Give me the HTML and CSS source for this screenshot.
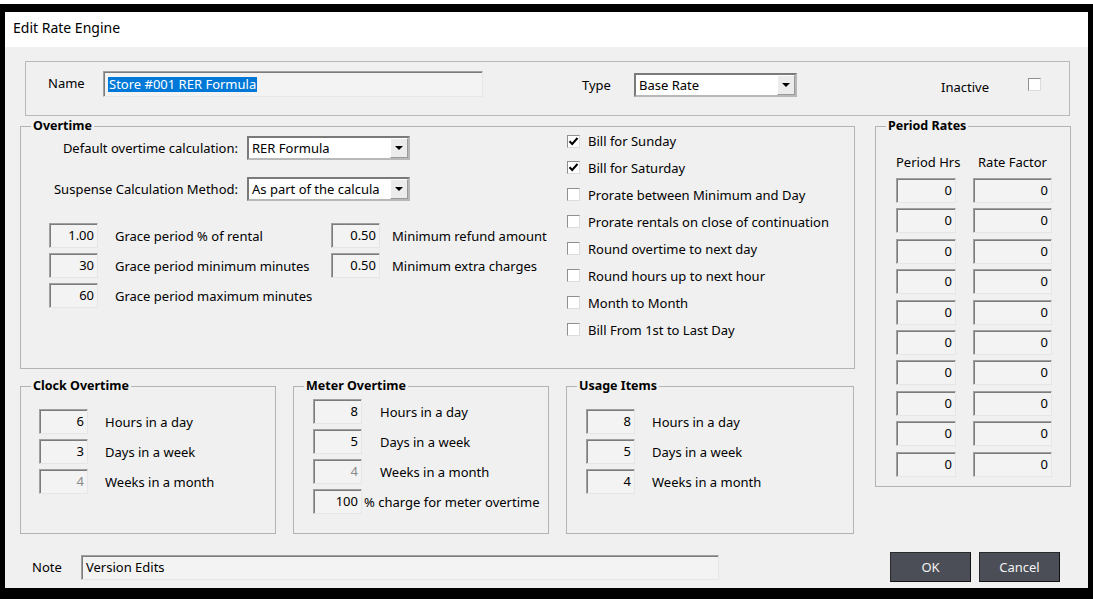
FILE: index.html
```html
<!DOCTYPE html>
<html>
<head>
<meta charset="utf-8">
<title>Edit Rate Engine</title>
<link rel="stylesheet" href="styles.css">
</head>
<body>
<div class="frame">
  <div class="titlebar">Edit Rate Engine</div>
  <div class="content">
    <div class="namebox">
      <span class="nm-label">Name</span>
      <span class="tb tb-left nm-input"><span class="sel-text">Store #001 RER Formula</span></span>
      <span class="type-label">Type</span>
      <span class="sel type-sel"><span class="sel-val">Base Rate</span><span class="sel-btn"><span class="tri"></span></span></span>
      <span class="inactive-label">Inactive</span>
      <span class="cb inactive-cb"></span>
    </div>

    <div class="main">
      <div class="left">
        <fieldset class="group overtime">
          <legend>Overtime</legend>
          <div class="ot-body">
            <div class="ot-left">
              <div class="sel-row">
                <span class="sel-label">Default overtime calculation:</span>
                <span class="sel"><span class="sel-val">RER Formula</span><span class="sel-btn"><span class="tri"></span></span></span>
              </div>
              <div class="sel-row second">
                <span class="sel-label">Suspense Calculation Method:</span>
                <span class="sel"><span class="sel-val">As part of the calcula</span><span class="sel-btn"><span class="tri"></span></span></span>
              </div>
              <div class="grace">
                <div class="fld-col">
                  <div class="fld"><span class="tb">1.00</span><span class="fl gl">Grace period % of rental</span></div>
                  <div class="fld"><span class="tb">30</span><span class="fl gl">Grace period minimum minutes</span></div>
                  <div class="fld"><span class="tb">60</span><span class="fl gl">Grace period maximum minutes</span></div>
                </div>
                <div class="fld-col">
                  <div class="fld"><span class="tb">0.50</span><span class="fl gr">Minimum refund amount</span></div>
                  <div class="fld"><span class="tb">0.50</span><span class="fl gr">Minimum extra charges</span></div>
                </div>
              </div>
            </div>
            <div class="cb-list">
              <div class="cb-row"><span class="cb"><svg viewBox="0 0 11 11" width="11" height="11"><path d="M1.5 5.2 L4.2 8 L9.5 2" fill="none" stroke="#000" stroke-width="2"/></svg></span><span class="cb-label">Bill for Sunday</span></div>
              <div class="cb-row"><span class="cb"><svg viewBox="0 0 11 11" width="11" height="11"><path d="M1.5 5.2 L4.2 8 L9.5 2" fill="none" stroke="#000" stroke-width="2"/></svg></span><span class="cb-label">Bill for Saturday</span></div>
              <div class="cb-row"><span class="cb"></span><span class="cb-label">Prorate between Minimum and Day</span></div>
              <div class="cb-row"><span class="cb"></span><span class="cb-label">Prorate rentals on close of continuation</span></div>
              <div class="cb-row"><span class="cb"></span><span class="cb-label">Round overtime to next day</span></div>
              <div class="cb-row"><span class="cb"></span><span class="cb-label">Round hours up to next hour</span></div>
              <div class="cb-row"><span class="cb"></span><span class="cb-label">Month to Month</span></div>
              <div class="cb-row"><span class="cb"></span><span class="cb-label">Bill From 1st to Last Day</span></div>
            </div>
          </div>
        </fieldset>

        <div class="subgroups">
          <fieldset class="group clock">
            <legend>Clock Overtime</legend>
            <div class="sg-body clock-body">
              <div class="fld"><span class="tb">6</span><span class="fl">Hours in a day</span></div>
              <div class="fld"><span class="tb">3</span><span class="fl">Days in a week</span></div>
              <div class="fld"><span class="tb dis">4</span><span class="fl">Weeks in a month</span></div>
            </div>
          </fieldset>
          <fieldset class="group meter">
            <legend>Meter Overtime</legend>
            <div class="sg-body meter-body">
              <div class="fld"><span class="tb">8</span><span class="fl">Hours in a day</span></div>
              <div class="fld"><span class="tb">5</span><span class="fl">Days in a week</span></div>
              <div class="fld"><span class="tb dis">4</span><span class="fl">Weeks in a month</span></div>
              <div class="fld"><span class="tb">100</span><span class="fl pct">% charge for meter overtime</span></div>
            </div>
          </fieldset>
          <fieldset class="group usage">
            <legend>Usage Items</legend>
            <div class="sg-body usage-body">
              <div class="fld"><span class="tb">8</span><span class="fl">Hours in a day</span></div>
              <div class="fld"><span class="tb">5</span><span class="fl">Days in a week</span></div>
              <div class="fld"><span class="tb">4</span><span class="fl">Weeks in a month</span></div>
            </div>
          </fieldset>
        </div>
      </div>

      <fieldset class="group period">
        <legend>Period Rates</legend>
        <div class="pr-body">
          <span class="pr-head">Period Hrs</span><span class="pr-head">Rate Factor</span>
          <span class="tb">0</span><span class="tb">0</span>
          <span class="tb">0</span><span class="tb">0</span>
          <span class="tb">0</span><span class="tb">0</span>
          <span class="tb">0</span><span class="tb">0</span>
          <span class="tb">0</span><span class="tb">0</span>
          <span class="tb">0</span><span class="tb">0</span>
          <span class="tb">0</span><span class="tb">0</span>
          <span class="tb">0</span><span class="tb">0</span>
          <span class="tb">0</span><span class="tb">0</span>
          <span class="tb">0</span><span class="tb">0</span>
        </div>
      </fieldset>
    </div>

    <div class="footer">
      <span class="note-label">Note</span>
      <span class="tb tb-left note-input">Version Edits</span>
      <span class="btn ok">OK</span>
      <span class="btn cancel">Cancel</span>
    </div>
  </div>
</div>
</body>
</html>
```
FILE: styles.css
```css
* { box-sizing: border-box; }
html, body { margin: 0; padding: 0; background: #fff; }
body {
  font-family: "Noto Sans", "Liberation Sans", sans-serif;
  font-size: 13px;
  line-height: 16px;
  color: #000;
  padding-top: 4px;
  width: 1093px;
  height: 599px;
  overflow: hidden;
}
.frame {
  border-style: solid;
  border-color: #000;
  border-width: 8px 5px 11px 5px;
  height: 595px;
  display: flex;
  flex-direction: column;
}
.titlebar {
  height: 35px;
  flex: none;
  background: #fff;
  padding: 0 0 3px 8px;
  display: flex;
  align-items: center;
  font-size: 14px;
}
.content {
  height: 541px;
  flex: none;
  background: #f0f0f0;
  padding-top: 14px;
}

/* generic controls */
.tb {
  display: block;
  height: 25px;
  background: #f3f3f3;
  border: 1px solid;
  border-color: #a0a0a0 #e6e6e6 #e6e6e6 #a0a0a0;
  box-shadow: inset 1px 1px 0 #7c7c7c;
  text-align: right;
  padding: 0 3px 0 4px;
  line-height: 23px;
  white-space: nowrap;
  overflow: hidden;
}
.tb-left { text-align: left; }
.tb.dis { color: #8a8a8a; }
.sel {
  display: flex;
  height: 24px;
  background: #fff;
  border: 2px solid;
  border-color: #7a7a7a #b8b8b8 #b8b8b8 #7a7a7a;
}
.sel-val {
  flex: 1;
  padding-left: 3px;
  line-height: 20px;
  white-space: nowrap;
  overflow: hidden;
}
.sel-btn {
  width: 18px;
  flex: none;
  background: #ececec;
  border: 1px solid;
  border-color: #fff #9a9a9a #9a9a9a #fff;
  display: flex;
  align-items: center;
  justify-content: center;
}
.tri {
  width: 0;
  height: 0;
  border-left: 4px solid transparent;
  border-right: 4px solid transparent;
  border-top: 4px solid #000;
}
.cb {
  display: flex;
  align-items: center;
  justify-content: center;
  width: 13px;
  height: 13px;
  flex: none;
  background: #fff;
  border: 1px solid;
  border-color: #8f8f8f #dcdcdc #dcdcdc #8f8f8f;
}
.cb svg { display: block; }

/* name box */
.namebox {
  margin-left: 20px;
  width: 1045px;
  height: 55px;
  border: 1px solid #b9b9b9;
  display: flex;
  align-items: flex-start;
  padding: 9px 0 0 22px;
}
.nm-label { width: 55px; line-height: 24px; }
.nm-input { width: 380px; height: 26px; padding-left: 4px; line-height: 24px; }
.sel-text {
  background: #0078d7;
  color: #fff;
  padding: 0 1px;
  display: inline-block;
  line-height: 15px;
}
.type-label { margin-left: 99px; width: 52px; line-height: 26px; margin-top: 1px; }
.type-sel { width: 163px; margin-top: 2px; }
.inactive-label { margin-left: 144px; width: 87px; line-height: 26px; margin-top: 3px; }
.inactive-cb { margin-top: 7px; }

/* main */
.main {
  display: grid;
  grid-template-columns: 835px 196px;
  column-gap: 20px;
  margin: 3px 0 0 15px;
  align-items: start;
}
.left { display: flex; flex-direction: column; gap: 10px; }

.group {
  margin: 0;
  padding: 0;
  min-width: 0;
  border: 1px solid #b4b4b4;
}
.group legend {
  font-weight: bold;
  font-size: 12.5px;
  line-height: 14px;
  padding: 0 2px;
  margin-left: 10px;
}
.overtime { height: 250px; }
.ot-body {
  display: grid;
  grid-template-columns: 546px auto;
}
.sel-row {
  display: grid;
  grid-template-columns: 217px 163px;
  column-gap: 9px;
  align-items: center;
  margin-top: 3px;
}
.sel-row.second { margin-top: 17px; }
.sel-label { text-align: right; white-space: nowrap; }
.grace {
  display: grid;
  grid-template-columns: 282px auto;
  margin: 22px 0 0 28px;
}
.fld-col { display: flex; flex-direction: column; gap: 5px; }
.fld { display: flex; align-items: center; }
.fld .tb { width: 49px; flex: none; }
.fl { white-space: nowrap; }
.gl { margin-left: 17px; }
.gr { margin-left: 12px; }

.cb-list {
  display: flex;
  flex-direction: column;
  gap: 10.95px;
}
.cb-row { display: flex; align-items: center; height: 16px; }
.cb-label { margin-left: 8px; white-space: nowrap; }

/* bottom sub groups */
.subgroups {
  display: grid;
  grid-template-columns: 256px 256px 288px;
  column-gap: 17px;
}
.subgroups .group { height: 155px; }
.sg-body { display: flex; flex-direction: column; gap: 5px; }
.sg-body .fl { margin-left: 17px; }
.clock-body { padding: 16px 0 0 18px; }
.meter-body { padding: 6px 0 0 19px; }
.meter-body .fl { margin-left: 18px; }
.meter-body .fl.pct { margin-left: 2px; }
.usage-body { padding: 16px 0 0 19px; }

/* period rates */
.period { height: 368px; }
.pr-body {
  display: grid;
  grid-template-columns: 60px 79px;
  column-gap: 17px;
  row-gap: 5.4px;
  padding: 21px 0 0 20px;
}
.pr-head { text-align: center; white-space: nowrap; margin-bottom: 2.6px; }

/* footer */
.footer {
  display: flex;
  align-items: center;
  margin-top: 18px;
  padding-left: 27px;
}
.note-label { width: 49px; }
.note-input { width: 638px; height: 25px; }
.btn {
  display: flex;
  align-items: center;
  justify-content: center;
  width: 81px;
  height: 30px;
  background: #4b4e56;
  color: #f2f2f2;
  border: 1px solid;
  border-color: #2a2a2a #111 #111 #2a2a2a;
}
.ok { margin-left: 171px; }
.cancel { margin-left: 8px; }
```
